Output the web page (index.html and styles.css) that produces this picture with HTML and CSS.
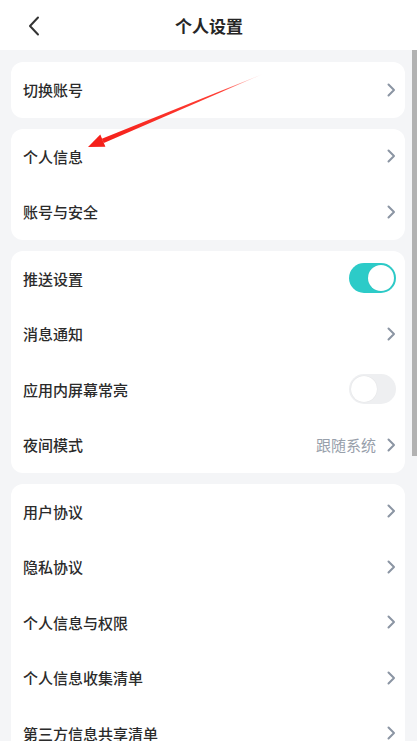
FILE: index.html
```html
<!DOCTYPE html>
<html lang="zh">
<head>
<meta charset="utf-8">
<title>个人设置</title>
<link rel="stylesheet" href="styles.css">
</head>
<body>
<div class="page">
  <header class="topbar">
    <span class="back">
      <svg width="12" height="20" viewBox="0 0 12 20"><path d="M10 1.5 L2 10 L10 18.5" fill="none" stroke="#333" stroke-width="2" stroke-linecap="round" stroke-linejoin="round"/></svg>
    </span>
    <h1 class="title">个人设置</h1>
  </header>
  <main class="content">
    <section class="card">
      <div class="row"><span class="label">切换账号</span><svg class="chev" viewBox="0 0 9 14"><path d="M1.5 1.5 L7 7 L1.5 12.5" /></svg></div>
    </section>
    <section class="card">
      <div class="row"><span class="label">个人信息</span><svg class="chev" viewBox="0 0 9 14"><path d="M1.5 1.5 L7 7 L1.5 12.5" /></svg></div>
      <div class="row"><span class="label">账号与安全</span><svg class="chev" viewBox="0 0 9 14"><path d="M1.5 1.5 L7 7 L1.5 12.5" /></svg></div>
    </section>
    <section class="card">
      <div class="row"><span class="label">推送设置</span><span class="switch on"><span class="knob"></span></span></div>
      <div class="row"><span class="label">消息通知</span><svg class="chev" viewBox="0 0 9 14"><path d="M1.5 1.5 L7 7 L1.5 12.5" /></svg></div>
      <div class="row"><span class="label">应用内屏幕常亮</span><span class="switch"><span class="knob"></span></span></div>
      <div class="row"><span class="label">夜间模式</span><span class="right"><span class="value">跟随系统</span><svg class="chev" viewBox="0 0 9 14"><path d="M1.5 1.5 L7 7 L1.5 12.5" /></svg></span></div>
    </section>
    <section class="card">
      <div class="row"><span class="label">用户协议</span><svg class="chev" viewBox="0 0 9 14"><path d="M1.5 1.5 L7 7 L1.5 12.5" /></svg></div>
      <div class="row"><span class="label">隐私协议</span><svg class="chev" viewBox="0 0 9 14"><path d="M1.5 1.5 L7 7 L1.5 12.5" /></svg></div>
      <div class="row"><span class="label">个人信息与权限</span><svg class="chev" viewBox="0 0 9 14"><path d="M1.5 1.5 L7 7 L1.5 12.5" /></svg></div>
      <div class="row"><span class="label">个人信息收集清单</span><svg class="chev" viewBox="0 0 9 14"><path d="M1.5 1.5 L7 7 L1.5 12.5" /></svg></div>
      <div class="row"><span class="label">第三方信息共享清单</span><svg class="chev" viewBox="0 0 9 14"><path d="M1.5 1.5 L7 7 L1.5 12.5" /></svg></div>
    </section>
  </main>
  <div class="scrollbar"></div>
  <svg class="annot" width="417" height="741" viewBox="0 0 417 741">
    <defs>
      <linearGradient id="g" x1="263" y1="74" x2="100" y2="141" gradientUnits="userSpaceOnUse">
        <stop offset="0" stop-color="#ff2a1f" stop-opacity="0"/>
        <stop offset="0.25" stop-color="#ff2a1f" stop-opacity="0.9"/>
        <stop offset="1" stop-color="#f5201a"/>
      </linearGradient>
    </defs>
    <polygon points="263,74 103.8,142.9 101.8,138.7" fill="url(#g)"/>
    <polygon points="88,147 100.3,134.6 105.4,146.8" fill="#f5201a"/>
  </svg>
</div>
</body>
</html>
```
FILE: styles.css
```css
* { box-sizing: border-box; margin: 0; padding: 0; }
html, body { width: 417px; height: 741px; overflow: hidden; }
body {
  background: #f4f5f7;
  font-family: "Noto Sans CJK SC", "Noto Sans", sans-serif;
  color: #2e2e2e;
}
.page { position: relative; width: 417px; height: 741px; overflow: hidden; }
.topbar {
  height: 50px;
  background: #ffffff;
  display: flex;
  align-items: center;
  justify-content: center;
  position: relative;
}
.back {
  position: absolute;
  left: 28px;
  top: 16px;
  width: 12px;
  height: 20px;
  display: flex;
}
.title {
  font-size: 17px;
  font-weight: 700;
  color: #262626;
  line-height: 1;
  margin-left: 1px;
}
.content {
  padding: 12px 12px 0 11px;
  display: flex;
  flex-direction: column;
  gap: 11px;
}
.card {
  background: #ffffff;
  border-radius: 12px;
  display: flex;
  flex-direction: column;
}
.row {
  height: 55.5px;
  display: flex;
  align-items: center;
  justify-content: space-between;
  padding: 0 9px 0 12px;
}
.label {
  font-size: 15px;
  font-weight: 500;
  color: #2b2b2b;
  line-height: 1;
}
.right { display: flex; align-items: center; gap: 11px; }
.value { font-size: 15px; color: #98a0ab; font-weight: 400; line-height: 1; }
.chev {
  width: 9px;
  height: 14px;
  fill: none;
  stroke: #8b95a3;
  stroke-width: 2;
  stroke-linecap: round;
  stroke-linejoin: round;
  flex: none;
}
.switch {
  width: 47px;
  height: 30px;
  border-radius: 15px;
  background: #eeeff1;
  display: flex;
  align-items: center;
  padding: 0 2px;
}
.switch .knob {
  width: 26px;
  height: 26px;
  border-radius: 50%;
  background: #ffffff;
  box-shadow: 0 0 1px rgba(0,0,0,0.12);
}
.switch.on { background: #2ccbc8; justify-content: flex-end; }
.scrollbar {
  position: absolute;
  right: 0;
  top: 50px;
  width: 5px;
  height: 406px;
  background: #b2b2b2;
}
.annot { position: absolute; left: 0; top: 0; pointer-events: none; }
```
